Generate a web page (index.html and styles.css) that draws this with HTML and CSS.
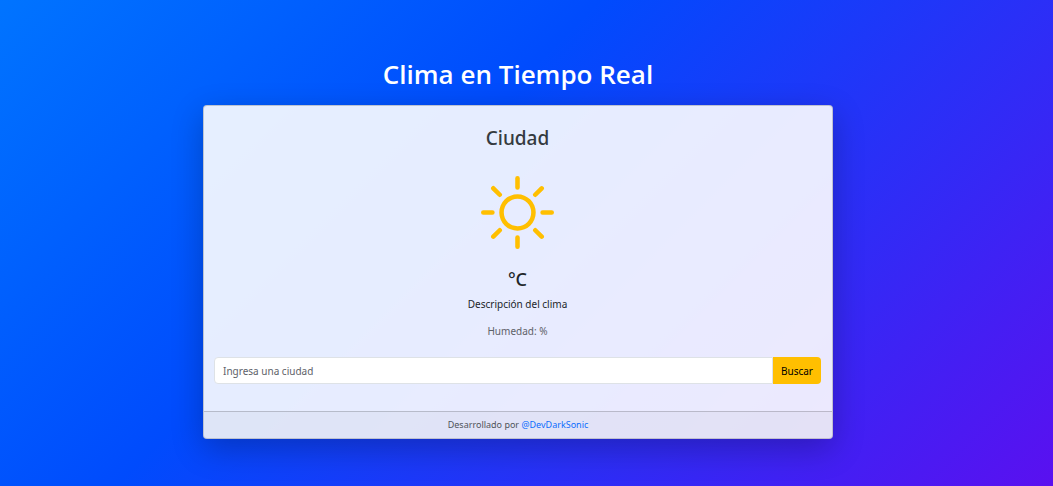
FILE: index.html
```html
<!DOCTYPE html>
<html lang="es">
<head>
<meta charset="utf-8">
<meta name="viewport" content="width=device-width, initial-scale=1">
<title>Clima en Tiempo Real</title>
<link rel="stylesheet" href="styles.css">
</head>
<body>
<main class="weather">
  <h1 class="weather-title">Clima en Tiempo Real</h1>
  <section class="card">
    <div class="card-body">
      <h2 class="city">Ciudad</h2>
      <svg class="sun" viewBox="0 0 16 16" fill="currentColor" aria-hidden="true">
        <path d="M8 11a3 3 0 1 1 0-6 3 3 0 0 1 0 6m0 1a4 4 0 1 0 0-8 4 4 0 0 0 0 8M8 0a.5.5 0 0 1 .5.5v2a.5.5 0 0 1-1 0v-2A.5.5 0 0 1 8 0m0 13a.5.5 0 0 1 .5.5v2a.5.5 0 0 1-1 0v-2A.5.5 0 0 1 8 13m8-5a.5.5 0 0 1-.5.5h-2a.5.5 0 0 1 0-1h2a.5.5 0 0 1 .5.5M3 8a.5.5 0 0 1-.5.5h-2a.5.5 0 0 1 0-1h2A.5.5 0 0 1 3 8m10.657-5.657a.5.5 0 0 1 0 .707l-1.414 1.415a.5.5 0 1 1-.707-.708l1.414-1.414a.5.5 0 0 1 .707 0m-9.193 9.193a.5.5 0 0 1 0 .707L3.05 13.657a.5.5 0 0 1-.707-.707l1.414-1.414a.5.5 0 0 1 .707 0m9.193 2.121a.5.5 0 0 1-.707 0l-1.414-1.414a.5.5 0 0 1 .707-.707l1.414 1.414a.5.5 0 0 1 0 .707M4.464 4.465a.5.5 0 0 1-.707 0L2.343 3.05a.5.5 0 1 1 .707-.707l1.414 1.414a.5.5 0 0 1 0 .708"/>
      </svg>
      <h3 class="temperature">°C</h3>
      <p class="description">Descripción del clima</p>
      <p class="humidity">Humedad: %</p>
      <form class="search">
        <input class="search-input" type="text" placeholder="Ingresa una ciudad" aria-label="Ciudad">
        <button class="search-button" type="button">Buscar</button>
      </form>
    </div>
    <footer class="card-footer">Desarrollado por <a class="author" href="#">@DevDarkSonic</a></footer>
  </section>
</main>
</body>
</html>
```
FILE: styles.css
```css
* {
  box-sizing: border-box;
}

body {
  margin: 0;
  min-height: 100vh;
  padding: 58px 17px 47px 0;
  background: linear-gradient(135deg, #0074ff 0%, #004bfd 39%, #5a10f0 100%);
  color: #212529;
  font-family: "Segoe UI", "Noto Sans", sans-serif;
  font-size: 10px;
  line-height: 16px;
}

h1, h2, h3, p {
  margin: 0;
}

.weather {
  width: 100%;
  max-width: 630px;
  margin: 0 auto;
  text-align: center;
}

.weather-title {
  margin-bottom: 15px;
  color: #fff;
  font-family: "Segoe UI", "Open Sans", sans-serif;
  font-size: 26px;
  font-weight: 600;
  line-height: 32px;
}

.card {
  overflow: hidden;
  border: 1px solid rgba(0, 0, 0, .18);
  border-radius: 4px;
  background: rgba(255, 255, 255, .9);
  box-shadow: 0 10px 32px rgba(0, 0, 0, .24);
}

.card-body {
  display: flex;
  flex-direction: column;
  align-items: center;
  padding: 21px 11px 27px 10px;
}

.city {
  margin-bottom: 26px;
  color: #343a40;
  font-size: 19px;
  font-weight: 500;
  line-height: 23px;
}

.sun {
  width: 73px;
  height: 73px;
  margin-bottom: 19px;
  color: #ffbf00;
}

.temperature {
  margin-bottom: 6px;
  font-size: 18px;
  font-weight: 500;
  line-height: 22px;
}

.description {
  margin-bottom: 11px;
}

.humidity {
  margin-bottom: 18px;
  color: #5d6168;
}

.search {
  display: flex;
  align-self: stretch;
}

.search-input {
  flex: 1;
  min-width: 0;
  height: 27px;
  padding: 0 8px;
  border: 1px solid #dee2e6;
  border-radius: 4px 0 0 4px;
  background: #fff;
  font: inherit;
}

.search-input::placeholder {
  color: #5d6168;
  opacity: 1;
}

.search-button {
  height: 27px;
  padding: 0 8px;
  border: 0;
  border-radius: 0 4px 4px 0;
  background: #ffbf00;
  color: #000;
  font: inherit;
}

.card-footer {
  padding: 5px 10px;
  border-top: 1px solid rgba(0, 0, 0, .18);
  background: rgba(0, 0, 0, .03);
  color: #4f545a;
  font-size: 9px;
}

.author {
  color: #0d6efd;
  text-decoration: none;
}
```
